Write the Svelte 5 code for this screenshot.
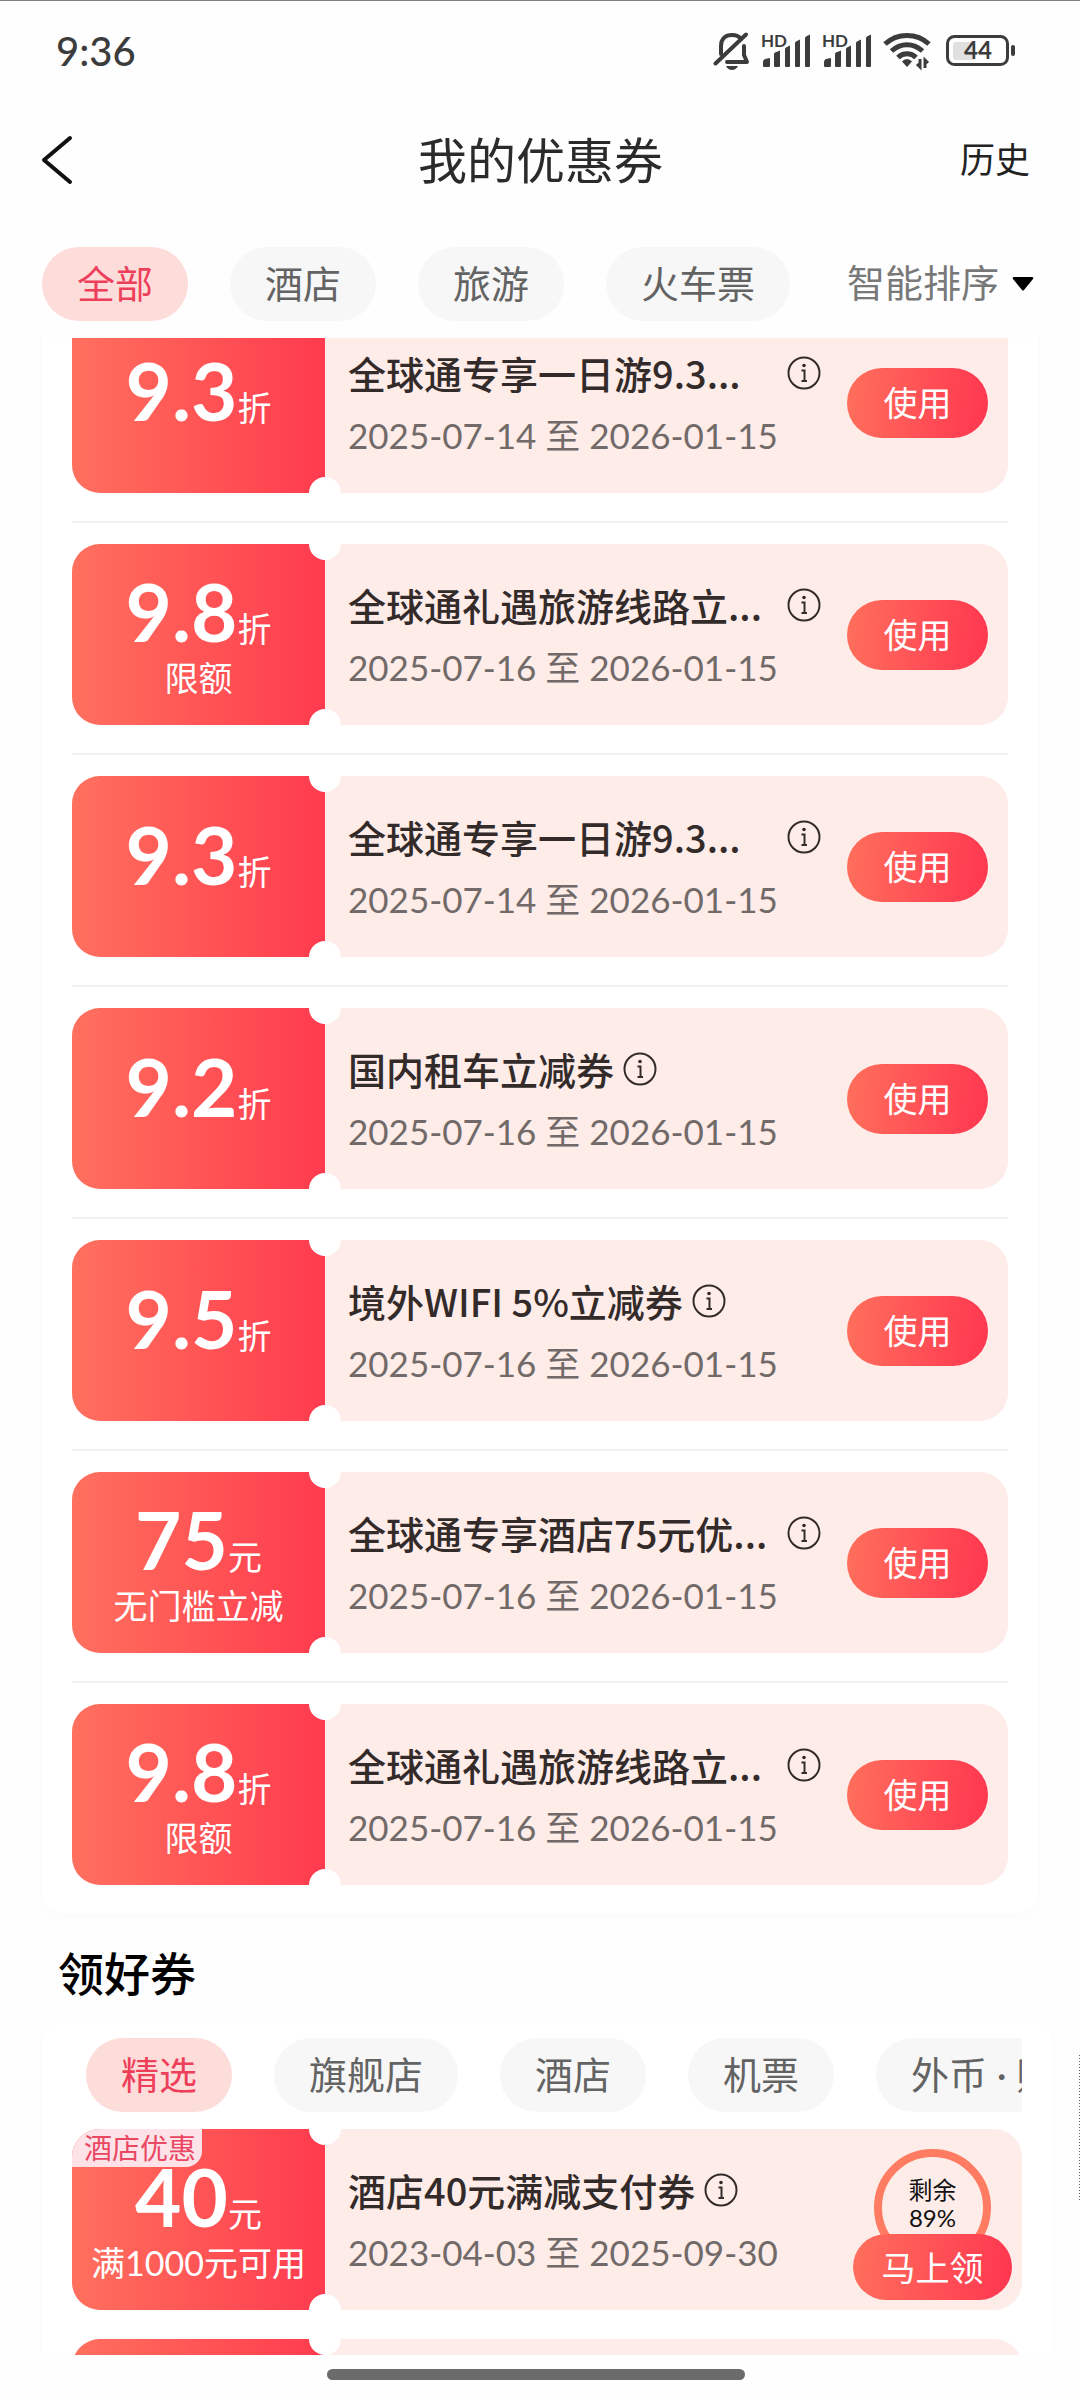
<!--
    App.svelte
    我的优惠券页面
    - 顶部状态栏 / 标题栏 / 分类筛选
    - 已有优惠券列表
    - 领好券（可领取的优惠券）
-->
<script>
    // 优惠券分类
    const filters = ['全部', '酒店', '旅游', '火车票'];
    let activeFilter = $state('全部');

    // 领券分类
    const shopTabs = ['精选', '旗舰店', '酒店', '机票', '外币 · 购物'];
    let activeTab = $state('精选');

    // 已有优惠券, cut: 标题过长已截断
    const coupons = [
        { amount: '9.3', unit: '折', title: '全球通专享一日游9.3...', cut: true, from: '2025-07-14', to: '2026-01-15' },
        { amount: '9.8', unit: '折', note: '限额', title: '全球通礼遇旅游线路立...', cut: true, from: '2025-07-16', to: '2026-01-15' },
        { amount: '9.3', unit: '折', title: '全球通专享一日游9.3...', cut: true, from: '2025-07-14', to: '2026-01-15' },
        { amount: '9.2', unit: '折', title: '国内租车立减券', from: '2025-07-16', to: '2026-01-15' },
        { amount: '9.5', unit: '折', title: '境外WIFI 5%立减券', from: '2025-07-16', to: '2026-01-15' },
        { amount: '75', unit: '元', note: '无门槛立减', title: '全球通专享酒店75元优...', cut: true, from: '2025-07-16', to: '2026-01-15' },
        { amount: '9.8', unit: '折', note: '限额', title: '全球通礼遇旅游线路立...', cut: true, from: '2025-07-16', to: '2026-01-15' }
    ];

    // 可领取的优惠券
    const offer = {
        tag: '酒店优惠', amount: '40', unit: '元', note: '满1000元可用',
        title: '酒店40元满减支付券', from: '2023-04-03', to: '2025-09-30', left: 89
    };
</script>

<!-- 信号图标 -->
{#snippet signal()}
    <svg class="signal" width="50" height="34" viewBox="0 0 50 34">
        <text x="0" y="13" class="hd">HD</text>
        <path d="M2 32v-4q0-2 2-3l5-1v8q0 1-1 1H3q-1 0-1-1zM13 32V20q0-1 1-1.500l5-2V32q0 1-1 1h-4q-1 0-1-1zM24 32V15q0-1 1-1.500l4-2V32q0 1-1 1h-3q-1 0-1-1zM34 32V9q0-1 1-1.500l4-2V32q0 1-1 1h-3q-1 0-1-1zM44 32V4q0-1 1-1.500l4-2V32q0 1-1 1h-3q-1 0-1-1z" />
    </svg>
{/snippet}

<!-- 券面左侧金额 -->
{#snippet stub(item)}
    <div class="stub" class:bare={!item.note}>
        {#if item.tag}<span class="tag">{item.tag}</span>{/if}
        <p class="amount"><strong>{item.amount}</strong><span>{item.unit}</span></p>
        {#if item.note}<p class="note">{item.note}</p>{/if}
    </div>
{/snippet}

<!-- 标题与有效期 -->
{#snippet info(item)}
    <div class="info">
        <div class="title-row">
            <h3 class:cut={item.cut}>{item.title}</h3>
            <button class="tip" aria-label="使用说明">
                <svg width="34" height="34" viewBox="0 0 34 34">
                    <circle cx="17" cy="17" r="15.500" />
                    <path d="M14.500 14.500h3v10M14.500 25h5.500" />
                    <circle class="dot" cx="17" cy="9.500" r="1.800" />
                </svg>
            </button>
        </div>
        <p class="date">{item.from} 至 {item.to}</p>
    </div>
{/snippet}

<div class="page">
    <div class="status">
        <span class="time">9:36</span>
        <div class="status-icons">
            <svg class="bell" width="36" height="38" viewBox="0 0 36 38">
                <path d="M7 22V14C7 7 11 3 18 3c4 0 7 1 9 4M30 14v9l3 7H13" />
                <path d="M1.500 31.500 32 2.500" />
                <path class="fill" d="M12 34h12q-2 4-6 4t-6-4z" />
            </svg>
            {@render signal()}
            {@render signal()}
            <svg class="wifi" width="48" height="36" viewBox="0 0 48 36">
                <path d="M2 11C14-.5 34-.5 46 11M8.500 18c9-8.500 22-8.500 31 0M15 24.500c5-5 13-5 18 0" />
                <path class="fill" d="M24 26q3 0 5 2.500L24 34l-5-5.500Q21 26 24 26z" />
                <path class="thin" d="M37 26v8l-3-3M42 35v-8l3 3" />
            </svg>
            <svg class="battery" width="70" height="32" viewBox="0 0 70 32">
                <rect class="level" x="7" y="7" width="22" height="18" rx="3" />
                <rect class="shell" x="1.500" y="1.500" width="60" height="28" rx="7" />
                <rect class="nub" x="65" y="10" width="4" height="11" rx="2" />
                <text x="32" y="24" text-anchor="middle">44</text>
            </svg>
        </div>
    </div>

    <header>
        <button class="back" aria-label="返回">
            <svg width="32" height="50" viewBox="0 0 32 50">
                <path d="M29 3 3 25l26 22" />
            </svg>
        </button>
        <h1>我的优惠券</h1>
        <a class="history" href="#history">历史</a>
    </header>

    <nav class="filters">
        {#each filters as name}
            <button class="chip" class:active={activeFilter === name} onclick={() => (activeFilter = name)}>{name}</button>
        {/each}
        <button class="sort">
            智能排序
            <svg width="22" height="14" viewBox="0 0 22 14"><path d="M2 0h18q2 0 1 2L12 13q-1 1-2 0L1 2Q0 0 2 0z" /></svg>
        </button>
    </nav>

    <main>
        <ul class="panel owned">
            {#each coupons as item}
                <li>
                    <article class="coupon">
                        {@render stub(item)}
                        {@render info(item)}
                        <button class="use">使用</button>
                    </article>
                </li>
            {/each}
        </ul>

        <h2>领好券</h2>

        <section class="panel shop">
            <div class="tabs">
                {#each shopTabs as name}
                    <button class="chip" class:active={activeTab === name} onclick={() => (activeTab = name)}>{name}</button>
                {/each}
            </div>
            <article class="coupon">
                {@render stub(offer)}
                {@render info(offer)}
                <div class="claim">
                    <div class="ring"><span>剩余</span><span>{offer.left}%</span></div>
                    <button class="grab">马上领</button>
                </div>
            </article>
            <article class="coupon next">
                <div class="stub"></div>
            </article>
        </section>
        <span class="side-mark"></span>
    </main>

    <div class="home"><span></span></div>
</div>

<style>
:global(body) {
    margin: 0; background: #fefefe;
    font-family: Lato, "Noto Sans CJK SC", sans-serif;
}
h1, h2, h3, p, ul { margin: 0; padding: 0; font-weight: 400; }
ul { list-style: none; }
button {
    font: inherit; border: none; padding: 0;
    background: none; cursor: pointer;
}
svg { display: block; flex: none; overflow: visible; }
.page {
    display: flex; flex-direction: column;
    height: 100vh; box-sizing: border-box;
    border-top: 1px solid #808080; overflow: hidden;
}

/* 状态栏 */
.status {
    display: flex; align-items: center; justify-content: space-between;
    height: 99px; flex: none; padding: 0 64px 0 56px;
    color: #3c3c3c;
}
.time { font-size: 40px; font-weight: 500; }
.status-icons { display: flex; align-items: center; gap: 11px; fill: #3c3c3c; }
.bell { fill: none; stroke: #3c3c3c; stroke-width: 4; stroke-linecap: round; stroke-linejoin: round; }
.bell .fill { fill: #3c3c3c; stroke: none; }
.hd { font-size: 17px; font-weight: 700; }
.wifi { fill: none; stroke: #3c3c3c; stroke-width: 5; }
.wifi .fill { fill: #3c3c3c; stroke: none; }
.wifi .thin { stroke-width: 3; }
.battery { margin-left: 4px; }
.battery .shell { fill: none; stroke: #3c3c3c; stroke-width: 3; }
.battery .level { fill: #e0e0e0; }
.battery text { font-size: 24px; font-weight: 700; }

/* 标题栏 */
header {
    display: grid; grid-template-columns: 1fr auto 1fr; align-items: center;
    height: 120px; flex: none; padding: 0 50px 0 41px;
}
.back { justify-self: start; }
.back path { fill: none; stroke: #111; stroke-width: 4; stroke-linecap: round; stroke-linejoin: round; }
h1 { padding-left: 10px; font-size: 49px; line-height: 60px; color: #2b2b2b; }
.history { justify-self: end; font-size: 35px; line-height: 52px; padding-bottom: 2px; color: #222; text-decoration: none; }

/* 分类 */
.filters {
    display: flex; align-items: center; gap: 42px;
    flex: none; padding: 27px 46px 17px 42px;
}
.chip {
    flex: none; height: 74px; padding: 0 35px 2px;
    font-size: 38px; line-height: 72px; white-space: nowrap;
    color: #636363; background: #f7f7f7; border-radius: 37px;
}
.chip.active { color: #ee3f5a; background: #fdddda; }
.sort {
    display: flex; align-items: center; gap: 13px;
    margin-left: auto; flex: none; font-size: 38px; line-height: 70px;
    padding-bottom: 4px; color: #787878;
}
.sort svg { fill: #000; margin-top: 4px; }

/* 列表区域 */
main { flex: 1; min-height: 0; overflow: hidden; position: relative; }
.panel {
    background: #fff; border-radius: 20px;
    box-shadow: 0 4px 16px rgba(0, 0, 0, .02);
}
.owned { margin: -26px 42px 0; padding: 0 30px 28px; }
.owned li + li { margin-top: 28px; padding-top: 21px; border-top: 2px solid #f1f1f1; }
.coupon {
    position: relative; display: flex; align-items: center;
    height: 181px; border-radius: 28px; overflow: hidden;
    background: #feece9;
}
/* 上下半圆缺口 */
.coupon::before, .coupon::after {
    content: ''; position: absolute; left: 237px;
    width: 32px; height: 32px; border-radius: 50%; background: #fff;
}
.coupon::before { top: -16px; }
.coupon::after { bottom: -16px; }
.stub {
    width: 253px; height: 100%; flex: none; box-sizing: border-box;
    padding-top: 38px; color: #fff; text-align: center;
    background: linear-gradient(90deg, #ff705e, #ff5555 50%, #ff3b4f);
}
.stub.bare { padding-top: 49px; }
.amount {
    display: flex; align-items: baseline; justify-content: center;
    height: 64px; line-height: 58px; font-size: 34px;
}
.amount strong { font-size: 80px; font-weight: 700; }
.amount span { line-height: 46px; }
.note { margin-top: 9px; font-size: 34px; line-height: 46px; white-space: nowrap; }
.tag {
    position: absolute; left: 0; top: 0;
    padding: 0 6px 0 12px; border-radius: 0 0 16px 0;
    font-size: 28px; line-height: 38px;
    color: #ea4763; background: #fde2e8;
}
.info { flex: 1; min-width: 0; padding: 2px 0 0 23px; }
.title-row { display: flex; align-items: center; gap: 9px; }
h3 {
    font-family: "Noto Sans CJK SC", sans-serif;
    font-size: 38px; line-height: 56px; font-weight: 500;
    color: #332b2a; white-space: nowrap;
}
h3.cut { width: 430px; }
.tip svg { fill: none; stroke: #332b2a; stroke-width: 2; }
.tip .dot { fill: #332b2a; stroke: none; }
.date { margin-top: 6px; font-size: 35px; line-height: 56px; color: #716a68; white-space: nowrap; }
.use {
    width: 141px; height: 70px; margin-right: 20px; flex: none;
    padding-bottom: 2px; font-size: 34px; color: #fff; border-radius: 35px;
    background: linear-gradient(95deg, #ff6f5c, #ff3650);
}

/* 领好券 */
h2 {
    margin: 26px 58px 0; font-size: 46px; line-height: 70px;
    font-weight: 500; color: #000;
}
.shop { margin: 14px 28px 0 42px; padding: 15px 30px 0; }
.tabs { display: flex; gap: 42px; padding-left: 14px; margin-bottom: 17px; overflow: hidden; }
.claim {
    display: flex; flex-direction: column; align-items: center;
    align-self: flex-start; margin: 20px 10px 0 0; flex: none;
}
.ring {
    display: flex; flex-direction: column; align-items: center; justify-content: center;
    width: 117px; height: 117px; box-sizing: border-box; padding-bottom: 8px;
    border: 8px solid #ff7b61; border-radius: 50%;
    font-size: 24px; line-height: 28px; color: #111;
}
.grab {
    position: relative; width: 159px; height: 66px; margin-top: -32px;
    padding-bottom: 2px; font-size: 34px; color: #fff; border-radius: 33px;
    background: linear-gradient(95deg, #ff6f5c, #ff3650);
}
.next { margin-top: 29px; }
/* 右侧边缘的悬浮条 */
.side-mark {
    position: absolute; right: 0; bottom: 155px; width: 1px; height: 145px;
    background: repeating-linear-gradient(#666 0 1px, #fefefe 1px 3px);
}

.home { display: flex; justify-content: center; flex: none; height: 31px; padding-top: 14px; }
.home span { width: 418px; height: 11px; border-radius: 6px; background: #6b6b6b; margin-right: 8px; }
</style>
